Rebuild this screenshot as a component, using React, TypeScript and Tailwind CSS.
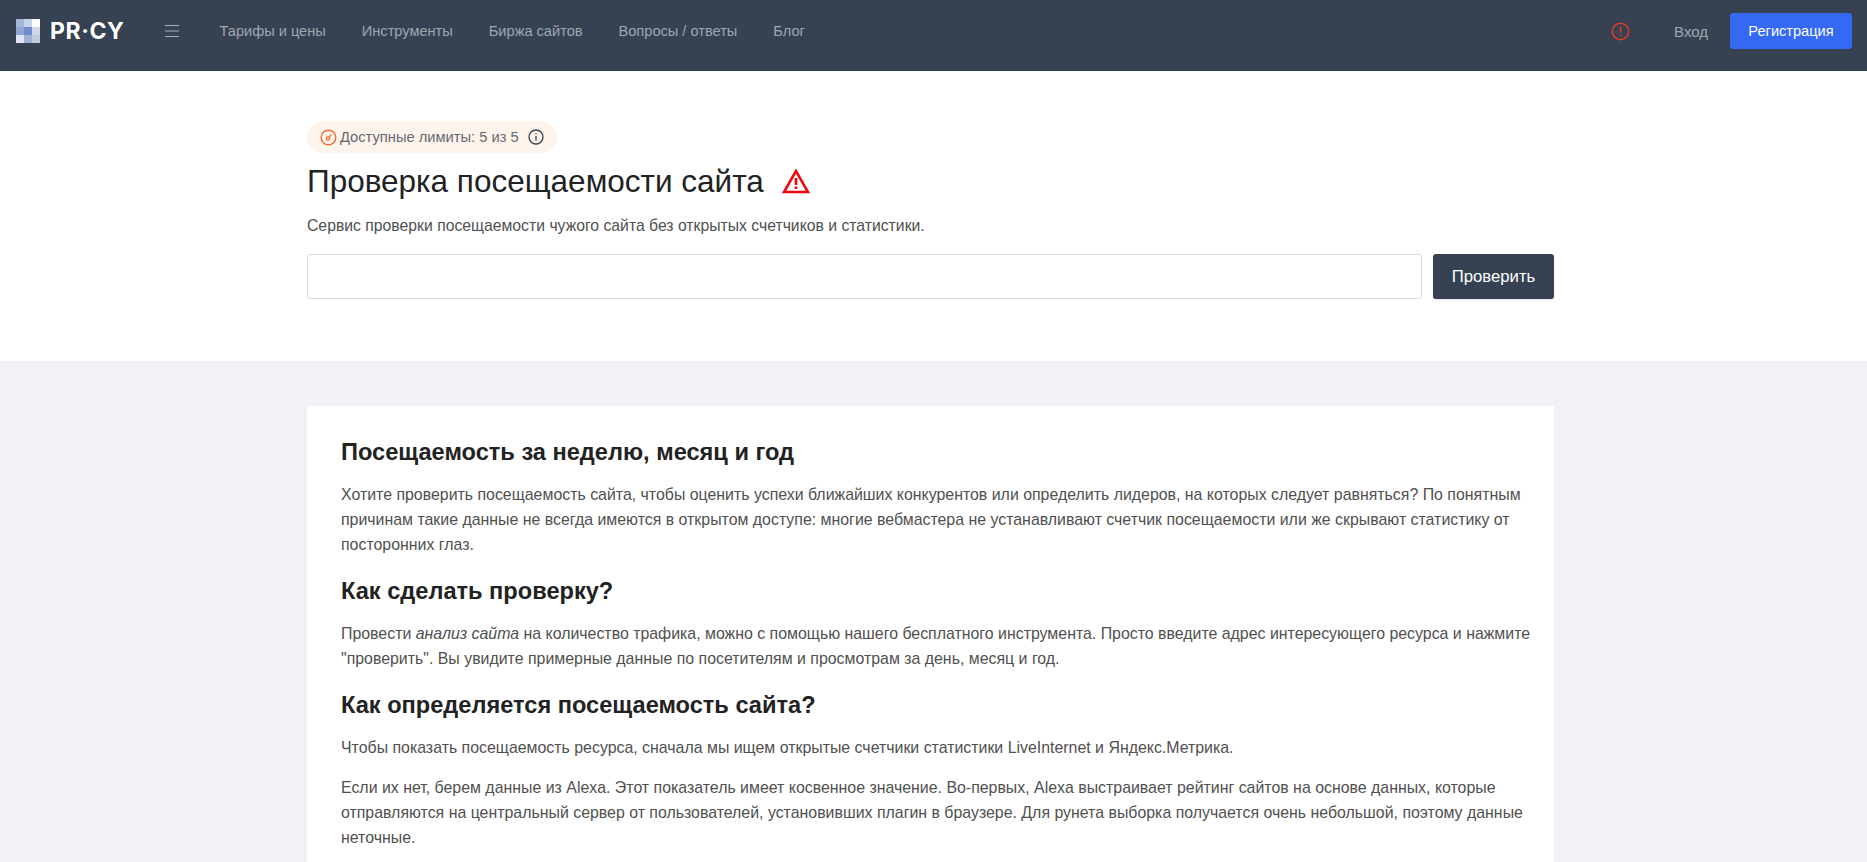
import React from "react";

const navItems = ["Тарифы и цены", "Инструменты", "Биржа сайтов", "Вопросы / ответы", "Блог"];

function Logo() {
  const cells = ["#a3b6da", "#c8d4ee", "#fbfcfe", "#8fa6d3", "#6f8ccb", "#d0d8e8", "#dfe5f2", "#9fb2da", "#c0cde0"];
  return (
    <div className="flex items-center">
      <div className="grid h-[24px] w-[24px] grid-cols-3 grid-rows-3">
        {cells.map((c, i) => (
          <div key={i} style={{ backgroundColor: c }} />
        ))}
      </div>
      <span className="ml-[10px] text-[23px] font-bold leading-none tracking-[0.6px] text-white [font-family:Inter,sans-serif]">PR·CY</span>
    </div>
  );
}

export default function App() {
  return (
    <div className="h-screen overflow-hidden bg-[#f1f2f6] text-[15.9px] leading-[25px] text-[#505050] [font-family:'Liberation_Sans',Arial,sans-serif]">
      <header className="flex h-[71px] items-start bg-[#364252] pt-[13px] pr-[15px] pl-[16px]">
        <div className="flex h-[36px] flex-1 items-center">
          <Logo />
          <svg className="ml-[39px]" width="16" height="14" viewBox="0 0 16 14" fill="none" stroke="#a7adb6" strokeWidth="1.2">
            <path d="M1 1.5h14M1 7h14M1 12.5h14" />
          </svg>
          <nav className="ml-[40px] flex gap-[36px] text-[14.6px] text-[#a0a6ae]">
            {navItems.map((n) => (
              <a key={n}>{n}</a>
            ))}
          </nav>
        </div>
        <div className="flex h-[36px] items-center">
          <svg width="19" height="19" viewBox="0 0 19 19" fill="none" stroke="#e8391f" strokeWidth="1.5">
            <circle cx="9.5" cy="9.5" r="8.2" />
            <path d="M9.5 4.8v6M9.5 12.6v1.6" />
          </svg>
          <a className="ml-[44px] text-[15px] text-[#a0a6ae]">Вход</a>
          <a className="ml-[22px] flex h-[36px] w-[122px] items-center justify-center rounded-[3px] bg-[#3369f3] text-[14.6px] text-white">Регистрация</a>
        </div>
      </header>

      <section className="h-[290px] bg-white">
        <div className="ml-[307px] w-[1247px] pt-[50px]">
          <div className="flex h-[32px] w-[250px] items-center rounded-full bg-[#fef4ec] pl-[13px] text-[14.7px] text-[#666a70]">
            <svg width="17" height="17" viewBox="0 0 17 17" fill="none" stroke="#ee6c3a" strokeWidth="1.4">
              <circle cx="8.5" cy="8.5" r="7.3" />
              <circle cx="8" cy="9.5" r="1.6" />
              <path d="M9.2 8.3l2-3" />
            </svg>
            <span className="ml-[3px]">Доступные лимиты: 5 из 5</span>
            <svg className="ml-[9px]" width="16" height="16" viewBox="0 0 16 16" fill="none" stroke="#364252" strokeWidth="1.3">
              <circle cx="8" cy="8" r="7" />
              <path d="M8 7v4.5M8 4.2v1.4" />
            </svg>
          </div>
          <div className="mt-[6px] flex h-[44px] items-center">
            <h1 className="text-[31.5px] leading-[44px] font-normal text-[#222222]">Проверка посещаемости сайта</h1>
            <svg className="ml-[18px]" width="28" height="26" viewBox="0 0 28 26" fill="none" stroke="#f5040b" strokeWidth="2.6" strokeLinejoin="miter">
              <path d="M14 3L2 24h24z" />
              <path d="M14 10v7M14 18.6v2.4" />
            </svg>
          </div>
          <p className="mt-[10px] text-[15.75px] leading-[25px]">Сервис проверки посещаемости чужого сайта без открытых счетчиков и статистики.</p>
          <div className="mt-[16px] flex gap-[11px]">
            <input className="h-[45px] flex-1 rounded-[3px] border border-[#dcdcdc] bg-white" />
            <button className="h-[45px] w-[121px] rounded-[3px] bg-[#364252] text-[16.7px] text-white shadow-[0_1px_2px_rgba(0,0,0,0.12)]">Проверить</button>
          </div>
        </div>
      </section>

      <main className="mt-[45px] ml-[307px] w-[1247px] bg-white pt-[31px] pr-[10px] pb-[40px] pl-[34px]">
        <h2 className="text-[23.6px] leading-[30px] font-bold text-[#222222]">Посещаемость за неделю, месяц и год</h2>
        <p className="mt-[15px]">Хотите проверить посещаемость сайта, чтобы оценить успехи ближайших конкурентов или определить лидеров, на которых следует равняться? По понятным причинам такие данные не всегда имеются в открытом доступе: многие вебмастера не устанавливают счетчик посещаемости или же скрывают статистику от посторонних глаз.</p>
        <h2 className="mt-[19px] text-[23.6px] leading-[30px] font-bold text-[#222222]">Как сделать проверку?</h2>
        <p className="mt-[15px]">Провести <em>анализ сайта</em> на количество трафика, можно с помощью нашего бесплатного инструмента. Просто введите адрес интересующего ресурса и нажмите "проверить". Вы увидите примерные данные по посетителям и просмотрам за день, месяц и год.</p>
        <h2 className="mt-[19px] text-[23.6px] leading-[30px] font-bold text-[#222222]">Как определяется посещаемость сайта?</h2>
        <p className="mt-[15px]">Чтобы показать посещаемость ресурса, сначала мы ищем открытые счетчики статистики LiveInternet и Яндекс.Метрика.</p>
        <p className="mt-[15px]">Если их нет, берем данные из Alexa. Этот показатель имеет косвенное значение. Во-первых, Alexa выстраивает рейтинг сайтов на основе данных, которые отправляются на центральный сервер от пользователей, установивших плагин в браузере. Для рунета выборка получается очень небольшой, поэтому данные неточные.</p>
      </main>
    </div>
  );
}
